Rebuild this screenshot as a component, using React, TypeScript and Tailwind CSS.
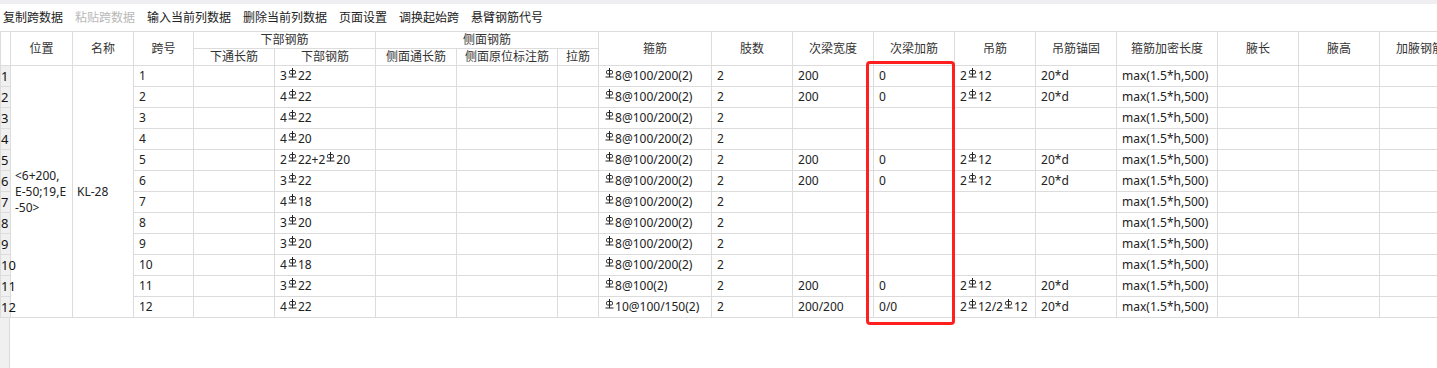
import React from "react";

const toolbar = ["复制跨数据", "粘贴跨数据", "输入当前列数据", "删除当前列数据", "页面设置", "调换起始跨", "悬臂钢筋代号"];

// column widths, left to right
const widths = [10, 62, 61, 60, 81, 101, 81, 101, 41, 113, 81, 81, 81, 81, 81, 101, 81, 81, 81];

const bottom = ["3#22", "4#22", "4#22", "4#20", "2#22+2#20", "3#22", "4#18", "3#20", "3#20", "4#18", "3#22", "4#22"];
const stirrup = ["#8@100/200(2)", "#8@100/200(2)", "#8@100/200(2)", "#8@100/200(2)", "#8@100/200(2)", "#8@100/200(2)", "#8@100/200(2)", "#8@100/200(2)", "#8@100/200(2)", "#8@100/200(2)", "#8@100(2)", "#10@100/150(2)"];
const hasSub = [true, true, false, false, true, true, false, false, false, false, true, true];

function Sym() {
  return (
    <svg width="9" height="10" viewBox="0 0 9 10" className="inline-block align-baseline relative -top-[2px] mx-[1px]" fill="none" stroke="currentColor" strokeWidth="1">
      <line x1="4.5" y1="0" x2="4.5" y2="9" />
      <rect x="1.5" y="2.5" width="6" height="3.5" rx="1.2" />
      <line x1="0.5" y1="9" x2="8.5" y2="9" />
    </svg>
  );
}

function Rebar({ text }: { text: string }) {
  const parts = text.split("#");
  return (
    <>
      {parts.map((p, i) => (
        <React.Fragment key={i}>
          {i > 0 && <Sym />}
          {p}
        </React.Fragment>
      ))}
    </>
  );
}

const th = "border border-[#dcdcdc] font-normal text-center text-[#333] p-0 leading-none";
const td = "border border-[#dcdcdc] px-[5px] text-left text-[#222] leading-none whitespace-nowrap overflow-hidden";

export default function App() {
  return (
    <div
      className="w-[1437px] h-[368px] overflow-hidden bg-white flex flex-col relative text-[12px]"
      style={{ fontFamily: '"Noto Sans", "Noto Sans CJK SC", sans-serif' }}
    >
      <div className="h-[4px] bg-[#efeff1] shrink-0" />
      <div className="h-[28px] shrink-0 flex items-center gap-[12px] pl-[3px] text-[#222]">
        {toolbar.map((t, i) => (
          <span key={t} className={i === 1 ? "text-[#b8b8b8]" : ""}>
            {t}
          </span>
        ))}
      </div>
      <table className="table-fixed border-collapse w-[1460px] shrink-0 -mt-px">
        <colgroup>
          {widths.map((w, i) => (
            <col key={i} style={{ width: w }} />
          ))}
        </colgroup>
        <thead>
          <tr className="h-[17px]">
            <th rowSpan={2} className={th} />
            <th rowSpan={2} className={th}>位置</th>
            <th rowSpan={2} className={th}>名称</th>
            <th rowSpan={2} className={th}>跨号</th>
            <th colSpan={2} className={th}>下部钢筋</th>
            <th colSpan={3} className={th}>侧面钢筋</th>
            <th rowSpan={2} className={th}>箍筋</th>
            <th rowSpan={2} className={th}>肢数</th>
            <th rowSpan={2} className={th}>次梁宽度</th>
            <th rowSpan={2} className={th}>次梁加筋</th>
            <th rowSpan={2} className={th}>吊筋</th>
            <th rowSpan={2} className={th}>吊筋锚固</th>
            <th rowSpan={2} className={th}>箍筋加密长度</th>
            <th rowSpan={2} className={th}>腋长</th>
            <th rowSpan={2} className={th}>腋高</th>
            <th rowSpan={2} className={`${th} whitespace-nowrap overflow-hidden`}>加腋钢筋</th>
          </tr>
          <tr className="h-[17px]">
            <th className={th}>下通长筋</th>
            <th className={th}>下部钢筋</th>
            <th className={th}>侧面通长筋</th>
            <th className={th}>侧面原位标注筋</th>
            <th className={th}>拉筋</th>
          </tr>
        </thead>
        <tbody>
          {bottom.map((b, i) => (
            <tr key={i} className="h-[21px]">
              <td className="border border-[#dcdcdc] bg-[#f0f0f0] p-0 text-[13px] text-[#111] leading-none whitespace-nowrap overflow-visible">
                {i + 1}
              </td>
              {i === 0 && (
                <>
                  <td rowSpan={12} className="border border-[#dcdcdc] px-[4px] text-left text-[#222] align-middle leading-[16px]">
                    <span className="block">&lt;6+200,</span>
                    <span className="block">E-50;19,E</span>
                    <span className="block">-50&gt;</span>
                  </td>
                  <td rowSpan={12} className="border border-[#dcdcdc] px-[4px] text-left text-[#222] align-middle">
                    KL-28
                  </td>
                </>
              )}
              <td className={td}>{i + 1}</td>
              <td className={td} />
              <td className={td}>
                <Rebar text={b} />
              </td>
              <td className={td} />
              <td className={td} />
              <td className={td} />
              <td className={td}>
                <Rebar text={stirrup[i]} />
              </td>
              <td className={td}>2</td>
              <td className={td}>{hasSub[i] ? (i === 11 ? "200/200" : "200") : ""}</td>
              <td className={td}>{hasSub[i] ? (i === 11 ? "0/0" : "0") : ""}</td>
              <td className={td}>{hasSub[i] && <Rebar text={i === 11 ? "2#12/2#12" : "2#12"} />}</td>
              <td className={td}>{hasSub[i] ? "20*d" : ""}</td>
              <td className={td}>max(1.5*h,500)</td>
              <td className={td} />
              <td className={td} />
              <td className={td} />
            </tr>
          ))}
        </tbody>
      </table>
      <div className="flex-1 flex">
        <div className="w-[10px] bg-[#f0f0f0] border-r border-[#dcdcdc]" />
      </div>
      <div className="absolute left-[866px] top-[61px] w-[89px] h-[264px] border-[3px] border-[#ff1f1f] rounded-[4px] pointer-events-none" />
    </div>
  );
}
